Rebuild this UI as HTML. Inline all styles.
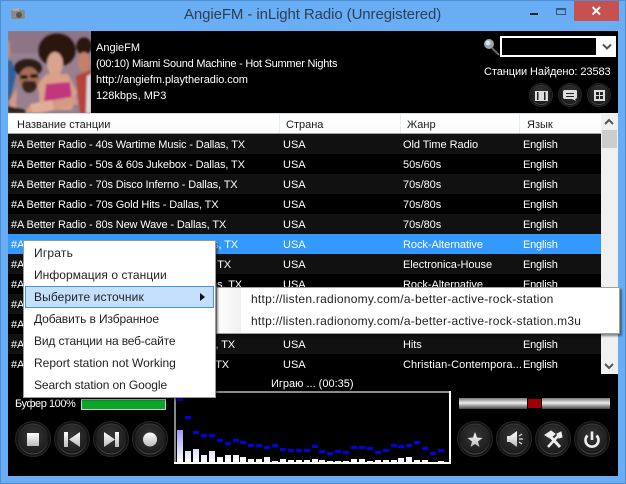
<!DOCTYPE html>
<html><head><meta charset="utf-8"><style>
*{box-sizing:border-box}
html,body{margin:0;padding:0;background:#6aaef5}
#w{position:relative;width:626px;height:484px;overflow:hidden;background:#69adf5;font-family:"Liberation Sans",sans-serif;font-size:11px;color:#fff}
#w>*{position:absolute}
.t{position:absolute;white-space:nowrap;line-height:14px}
.r{position:absolute;left:8px;width:593px;height:20px}
.r span{position:absolute;top:4px;white-space:nowrap;line-height:14px}
.a{left:3px;letter-spacing:-.13px}.b{left:275px}.c{left:395px;letter-spacing:-.05px}.d{left:515px;letter-spacing:-.2px}
.e{left:auto!important;letter-spacing:-.13px}
.h{position:absolute;top:4px;color:#1a1a1a;line-height:14px;white-space:nowrap}
.m{position:absolute;left:34px;white-space:nowrap;color:#222;font-size:12px;line-height:14px}
.s{position:absolute;left:251px;white-space:nowrap;color:#222;font-size:12px;line-height:14px;letter-spacing:.25px}
</style></head><body><div id="w">
<div style="left:0;top:0;width:626px;height:484px;border:1px solid #4f8fd0"></div>
<svg style="left:10px;top:7px" width="16" height="14"><rect x="1" y="3" width="14" height="9" rx="2" fill="#8a8a8a"/><rect x="3" y="1" width="6" height="3" fill="#aaa"/><circle cx="9" cy="8" r="3" fill="#555"/></svg>
<div class="t" style="left:184px;top:6px;font-size:15px;line-height:18px;color:#2b3f55;letter-spacing:-.1px">AngieFM - inLight Radio (Unregistered)</div>
<div style="left:530px;top:13px;width:8px;height:2px;background:#1c2430"></div>
<div style="left:556px;top:8px;width:10px;height:7px;border:1px solid #345a80;border-top-width:2px"></div>
<div style="left:574px;top:1px;width:45px;height:20px;background:#c75050"></div>
<svg style="left:590px;top:5px" width="13" height="12"><path d="M2.500 2L10 9.500M10 2L2.500 9.500" stroke="#fff" stroke-width="2"/></svg>

<div style="left:8px;top:31px;width:610px;height:445px;background:#000"></div>

<svg style="left:8px;top:31px" width="83" height="82" viewBox="8 31 83 82">
<defs><filter id="bl"><feGaussianBlur stdDeviation="1.1"/></filter></defs>
<rect x="8" y="31" width="83" height="82" fill="#97808f"/>
<g filter="url(#bl)">
<rect x="8" y="31" width="83" height="22" fill="#8d7486"/>
<path d="M8 58L12 62L16 75L10 100H8Z" fill="#2e5f9c"/>
<ellipse cx="8" cy="50" rx="2" ry="10" fill="#c78f78"/>
<ellipse cx="84" cy="46" rx="8" ry="9" fill="#2b1711"/>
<ellipse cx="84" cy="62" rx="6" ry="10" fill="#c4806a"/>
<path d="M76 76L91 70V113H80Z" fill="#b8433a"/>
<path d="M87 76L91 74V113H86Z" fill="#ddd"/>
<ellipse cx="57" cy="50" rx="19" ry="17" fill="#2a1510"/>
<ellipse cx="55" cy="64" rx="8" ry="12" fill="#d8a48e"/>
<path d="M46 74L68 74L77 92L72 110L40 110L38 84Z" fill="#d9a08a"/>
<path d="M46 84L70 82L72 99L44 102Z" fill="#c2367f"/>
<ellipse cx="28" cy="68" rx="14" ry="9" fill="#2b1a14"/>
<ellipse cx="29" cy="79" rx="10" ry="12" fill="#a66c55"/>
<path d="M22 86C24 95 34 95 37 86L35 81H23Z" fill="#3a241c"/>
<rect x="20" y="75" width="8" height="4" rx="2" fill="#0c0c0c"/><rect x="30" y="74" width="8" height="4" rx="2" fill="#0c0c0c"/>
<path d="M17 88L9 102L13 113H22L32 104L76 96L78 104L42 113H16Z" fill="#d39a84"/>
<path d="M30 104L52 100L54 110L32 113Z" fill="#e2ad98"/>
<path d="M8 106L26 110V113H8Z" fill="#2a2020"/>
</g>
</svg>

<div class="t" style="left:96px;top:41px">AngieFM</div>
<div class="t" style="left:96px;top:57px;letter-spacing:-.24px">(00:10) Miami Sound Machine - Hot Summer Nights</div>
<div class="t" style="left:96px;top:73px;letter-spacing:-.05px">http://angiefm.playtheradio.com</div>
<div class="t" style="left:96px;top:89px">128kbps, MP3</div>

<svg style="left:481px;top:37px" width="20" height="20"><circle cx="8" cy="7" r="5" fill="#9aa5a5"/><circle cx="7" cy="6" r="2.500" fill="#dde"/><path d="M11 11L18 18" stroke="#666" stroke-width="2"/></svg>
<div style="left:500px;top:36px;width:116px;height:21px;background:#fff"></div>
<div style="left:502px;top:38px;width:94px;height:17px;background:#000"></div>
<svg style="left:601px;top:42px" width="12" height="10"><path d="M2 2.500L6 6.500L10 2.500" fill="none" stroke="#555" stroke-width="2"/></svg>
<div class="t" style="left:484px;top:65px;letter-spacing:-.08px">Станции Найдено: 23583</div>

<svg style="left:0;top:0" width="626" height="484">
<defs>
<radialGradient id="g" cx=".5" cy=".4" r=".65"><stop offset="0" stop-color="#383838"/><stop offset=".8" stop-color="#1e1e1e"/><stop offset="1" stop-color="#101010"/></radialGradient>
<linearGradient id="rim" x1="0" y1="0" x2="0" y2="1"><stop offset="0" stop-color="#3a3a3a"/><stop offset=".5" stop-color="#161616"/><stop offset="1" stop-color="#4a4a4a"/></linearGradient>
<linearGradient id="ic" x1="0" y1="0" x2="0" y2="1"><stop offset="0" stop-color="#fff"/><stop offset="1" stop-color="#bbb"/></linearGradient>
<g id="B"><circle r="17.500" fill="#121212" stroke="#262626"/><circle r="15" fill="url(#g)" stroke="url(#rim)"/></g>
<g id="S"><circle r="11.500" fill="#141414" stroke="#262626"/><circle r="9.500" fill="url(#g)" stroke="url(#rim)"/></g>
<linearGradient id="bar" gradientUnits="userSpaceOnUse" x1="0" y1="430" x2="0" y2="462"><stop offset="0" stop-color="#9a9af8"/><stop offset=".7" stop-color="#e4e4fc"/><stop offset="1" stop-color="#fff"/></linearGradient>
<linearGradient id="vol" x1="0" y1="0" x2="0" y2="1"><stop offset="0" stop-color="#777"/><stop offset=".45" stop-color="#eee"/><stop offset="1" stop-color="#444"/></linearGradient>
</defs>
<use href="#S" x="541" y="95"/><use href="#S" x="570" y="95"/><use href="#S" x="599" y="95"/>
<g fill="#ddd"><rect x="535" y="91" width="13" height="10"/><path d="M565 90H576Q577 90 577 92V97Q577 99 575 99L576 101L572 99H565Q563 99 563 97V92Q563 90 565 90Z"/><rect x="594" y="90" width="11" height="11"/></g>
<g fill="#222"><rect x="537" y="92" width="1.500" height="8"/><rect x="544" y="92" width="1.500" height="8"/><rect x="566" y="93" width="8" height="1"/><rect x="566" y="96" width="8" height="1"/><rect x="596" y="92" width="3" height="3"/><rect x="600" y="92" width="3" height="3"/><rect x="596" y="96" width="3" height="3"/><rect x="600" y="96" width="3" height="3"/></g>

<use href="#B" x="33" y="439"/><use href="#B" x="72" y="439"/><use href="#B" x="111" y="439"/><use href="#B" x="150" y="439"/>
<use href="#B" x="475" y="439"/><use href="#B" x="514" y="439"/><use href="#B" x="553" y="439"/><use href="#B" x="592" y="439"/>
<g fill="url(#ic)">
<rect x="27" y="433" width="12" height="13"/>
<rect x="64" y="432" width="4" height="15"/><path d="M80 432V447L69 439.500Z"/>
<rect x="115" y="432" width="4" height="15"/><path d="M104 432V447L115 439.500Z"/>
<circle cx="150" cy="439.500" r="7"/>
<path d="M475 432L477 437.500L482.500 438L478 441.500L479.500 447L475 444L470.500 447L472 441.500L467.500 438L473 437.500Z"/>
<path d="M507 436H510L517 431V447L510 442H507Z"/>
</g>
<g stroke="#ddd" stroke-width="1.200" fill="none"><path d="M519 436L522 434M519 439H523M519 442L522 444"/></g>
<g stroke="#eee" fill="none"><path d="M548 447L558 436" stroke-width="2.500"/><path d="M549 435L560 447" stroke-width="3"/><path d="M545 435L551 431L555 434L550 438Z" fill="#eee" stroke-width="1"/><path d="M557 434L561 432L562 437L559 438Z" fill="#eee" stroke-width="1"/></g>
<g stroke="#eee" stroke-width="2.600" fill="none"><path d="M587.500 435.500A6.500 6.500 0 1 0 596.500 435.500"/><path d="M592 431.500V440"/></g>

<rect x="459" y="398" width="151" height="11" fill="url(#vol)"/>
<rect x="527" y="398" width="15" height="11" fill="#000"/>
<rect x="528" y="399" width="13" height="9" fill="#a00000"/>

<rect x="174" y="391" width="276" height="2" fill="#888"/><rect x="174" y="391" width="2" height="72" fill="#888"/>
<rect x="174" y="462" width="277" height="2" fill="#fff"/><rect x="449" y="391" width="2" height="73" fill="#fff"/>
<g fill="url(#bar)">
<rect x="177" y="430" width="6" height="32"/><rect x="185" y="451" width="6" height="11"/><rect x="193" y="449" width="6" height="13"/><rect x="201" y="455" width="6" height="7"/><rect x="209" y="451" width="6" height="11"/><rect x="217" y="457" width="6" height="5"/><rect x="225" y="455" width="6" height="7"/><rect x="233" y="455" width="6" height="7"/><rect x="240" y="457" width="6" height="5"/><rect x="248" y="459" width="6" height="3"/><rect x="256" y="459" width="6" height="3"/><rect x="264" y="457" width="6" height="5"/><rect x="272" y="461" width="6" height="1"/><rect x="280" y="459" width="6" height="3"/><rect x="288" y="460" width="6" height="2"/><rect x="296" y="460" width="6" height="2"/><rect x="304" y="460" width="6" height="2"/><rect x="312" y="459" width="6" height="3"/><rect x="319" y="460" width="6" height="2"/><rect x="327" y="461" width="6" height="1"/><rect x="335" y="461" width="6" height="1"/><rect x="343" y="461" width="6" height="1"/><rect x="351" y="459" width="6" height="3"/><rect x="359" y="459" width="6" height="3"/><rect x="367" y="461" width="6" height="1"/><rect x="375" y="460" width="6" height="2"/><rect x="383" y="460" width="6" height="2"/><rect x="391" y="460" width="6" height="2"/><rect x="398" y="458" width="6" height="4"/><rect x="406" y="457" width="6" height="5"/><rect x="414" y="460" width="6" height="2"/><rect x="422" y="460" width="6" height="2"/><rect x="438" y="461" width="6" height="1"/>
</g>
<g fill="#0000e0">
<rect x="177" y="398" width="6" height="3"/><rect x="185" y="416" width="6" height="3"/><rect x="193" y="431" width="6" height="3"/><rect x="201" y="434" width="6" height="3"/><rect x="209" y="434" width="6" height="3"/><rect x="217" y="439" width="6" height="3"/><rect x="225" y="442" width="6" height="3"/><rect x="233" y="439" width="6" height="3"/><rect x="240" y="441" width="6" height="3"/><rect x="248" y="444" width="6" height="3"/><rect x="256" y="444" width="6" height="3"/><rect x="264" y="446" width="6" height="3"/><rect x="272" y="444" width="6" height="3"/><rect x="280" y="448" width="6" height="3"/><rect x="288" y="449" width="6" height="3"/><rect x="296" y="449" width="6" height="3"/><rect x="304" y="449" width="6" height="3"/><rect x="312" y="445" width="6" height="3"/><rect x="319" y="450" width="6" height="3"/><rect x="327" y="452" width="6" height="3"/><rect x="335" y="450" width="6" height="3"/><rect x="343" y="451" width="6" height="3"/><rect x="351" y="446" width="6" height="3"/><rect x="359" y="446" width="6" height="3"/><rect x="367" y="447" width="6" height="3"/><rect x="375" y="451" width="6" height="3"/><rect x="383" y="449" width="6" height="3"/><rect x="391" y="444" width="6" height="3"/><rect x="398" y="445" width="6" height="3"/><rect x="406" y="444" width="6" height="3"/><rect x="414" y="441" width="6" height="3"/><rect x="422" y="447" width="6" height="3"/><rect x="430" y="452" width="6" height="3"/><rect x="438" y="449" width="6" height="3"/>
</g>
</svg>

<div class="t" style="left:15px;top:397px;letter-spacing:-.45px">Буфер 100%</div>
<div style="left:81px;top:399px;width:85px;height:11px;background:#0aa82a;outline:1px solid #ccc;outline-offset:-1px"></div>
<div class="t" style="left:271px;top:377px">Играю ... (00:35)</div>

<!-- list header -->
<div style="left:8px;top:113px;width:594px;height:21px;background:linear-gradient(#fff,#fbfcfe);border-top:1px solid #ddd;border-bottom:1px solid #a5a5a5">
<div style="position:absolute;left:271px;top:0;width:1px;height:19px;background:#e4ecf4"></div>
<div style="position:absolute;left:392px;top:0;width:1px;height:19px;background:#e4ecf4"></div>
<div style="position:absolute;left:511px;top:0;width:1px;height:19px;background:#e4ecf4"></div>
<span class="h" style="left:9px">Название станции</span><span class="h" style="left:278px">Страна</span><span class="h" style="left:399px">Жанр</span><span class="h" style="left:519px">Язык</span>
</div>

<!-- rows -->
<div class="r" style="top:134px;background:#111"><span class="a">#A Better Radio - 40s Wartime Music - Dallas, TX</span><span class="b">USA</span><span class="c">Old Time Radio</span><span class="d">English</span></div>
<div class="r" style="top:154px"><span class="a">#A Better Radio - 50s &amp; 60s Jukebox - Dallas, TX</span><span class="b">USA</span><span class="c">50s/60s</span><span class="d">English</span></div>
<div class="r" style="top:174px;background:#111"><span class="a">#A Better Radio - 70s Disco Inferno - Dallas, TX</span><span class="b">USA</span><span class="c">70s/80s</span><span class="d">English</span></div>
<div class="r" style="top:194px"><span class="a">#A Better Radio - 70s Gold Hits - Dallas, TX</span><span class="b">USA</span><span class="c">70s/80s</span><span class="d">English</span></div>
<div class="r" style="top:214px;background:#111"><span class="a">#A Better Radio - 80s New Wave - Dallas, TX</span><span class="b">USA</span><span class="c">70s/80s</span><span class="d">English</span></div>
<div class="r" style="top:234px;background:#3399ff"><span class="a">#A</span><span class="e" style="right:363px">Dallas, TX</span><span class="b">USA</span><span class="c">Rock-Alternative</span><span class="d">English</span></div>
<div class="r" style="top:254px;background:#111"><span class="a">#A</span><span class="e" style="right:370px">Dallas, TX</span><span class="b">USA</span><span class="c">Electronica-House</span><span class="d">English</span></div>
<div class="r" style="top:274px"><span class="a">#A</span><span class="e" style="right:359px">Dallas, TX</span><span class="b">USA</span><span class="c">Rock-Alternative</span><span class="d">English</span></div>
<div class="r" style="top:294px;background:#111"><span class="a">#A</span></div>
<div class="r" style="top:314px"><span class="a">#A</span></div>
<div class="r" style="top:334px;background:#111"><span class="a">#A</span><span class="e" style="right:366px">, TX</span><span class="b">USA</span><span class="c">Hits</span><span class="d">English</span></div>
<div class="r" style="top:354px"><span class="a">#A</span><span class="e" style="right:372px">Dallas, TX</span><span class="b">USA</span><span class="c" style="letter-spacing:.1px">Christian-Contempora...</span><span class="d">English</span></div>

<!-- scrollbar -->
<div style="left:601px;top:113px;width:17px;height:261px;background:#f0f0f0"></div>
<div style="left:602px;top:130px;width:15px;height:18px;background:#cdcdcd"></div>
<svg style="left:603px;top:117px" width="12" height="10"><path d="M2 7L6 3L10 7" fill="none" stroke="#555" stroke-width="2"/></svg>
<svg style="left:603px;top:361px" width="12" height="10"><path d="M2 3L6 7L10 3" fill="none" stroke="#555" stroke-width="2"/></svg>

<!-- submenu -->
<div style="left:216px;top:287px;width:404px;height:47px;background:#fff;border:1px solid #a0a0a0;box-shadow:2px 2px 2px rgba(0,0,0,.45)"><div style="position:absolute;left:0;top:0;width:24px;height:45px;background:linear-gradient(90deg,#fff,#f0f0f0)"></div></div>
<div class="s" style="top:292px">http://listen.radionomy.com/a-better-active-rock-station</div>
<div class="s" style="top:314px">http://listen.radionomy.com/a-better-active-rock-station.m3u</div>

<!-- context menu -->
<div style="left:23px;top:240px;width:193px;height:158px;background:#fff;border:1px solid #999;box-shadow:2px 2px 2px rgba(0,0,0,.45)"></div>
<div style="left:25px;top:286px;width:189px;height:22px;background:#c5e0fc;border:1px solid #3d95ed"></div>
<svg style="left:199px;top:292px" width="8" height="10"><path d="M1 1L6 5L1 9Z" fill="#111"/></svg>
<div class="m" style="top:246px;letter-spacing:.2px">Играть</div>
<div class="m" style="top:268px;letter-spacing:.05px">Информация о станции</div>
<div class="m" style="top:290px;letter-spacing:.1px">Выберите источник</div>
<div class="m" style="top:312px;letter-spacing:-.1px">Добавить в Избранное</div>
<div class="m" style="top:334px;letter-spacing:-.15px">Вид станции на веб-сайте</div>
<div class="m" style="top:356px">Report station not Working</div>
<div class="m" style="top:378px;letter-spacing:-.1px">Search station on Google</div>
</div></body></html>
